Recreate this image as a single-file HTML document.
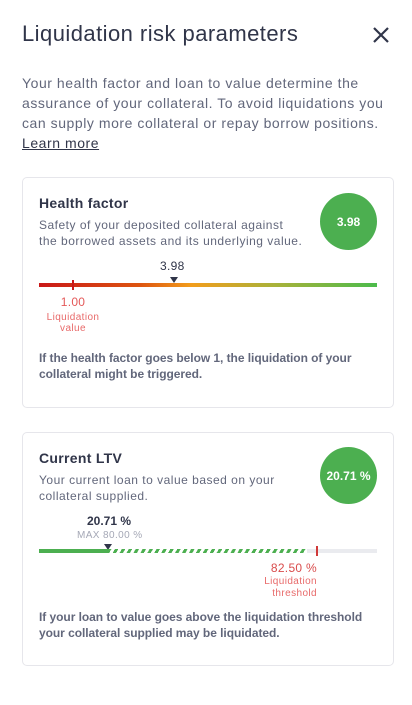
<!DOCTYPE html><html><head><style>
*{margin:0;padding:0;box-sizing:border-box}
body{width:412px;height:705px;background:#fff;font-family:"Liberation Sans",sans-serif;color:#303549;position:relative;overflow:hidden}
.a{position:absolute;white-space:nowrap}
.card{position:absolute;left:22px;width:372px;border:1px solid #e6e6eb;border-radius:5px}
.p{color:#62677b}
.circ{position:absolute;width:57px;height:57px;border-radius:50%;background:#4caf50;color:#fff;font-weight:bold;font-size:12px;display:flex;align-items:center;justify-content:center}
.tri{position:absolute;width:0;height:0;border-left:4px solid transparent;border-right:4px solid transparent;border-top:6px solid #303549}
</style></head><body>
<div class="a" style="left:22px;top:21px;font-size:22px;letter-spacing:.45px">Liquidation risk parameters</div>
<svg class="a" style="left:372px;top:26px" width="18" height="18" viewBox="0 0 18 18"><path d="M2 2L16 16M16 2L2 16" stroke="#303549" stroke-width="2.2"/></svg>
<div class="a p" style="left:22px;top:73px;font-size:14px;line-height:20px;letter-spacing:.55px">Your health factor and loan to value determine the<br>assurance of your collateral. To avoid liquidations you<br>can supply more collateral or repay borrow positions.<br><span style="text-decoration:underline;color:#303549">Learn more</span></div>

<div class="card" style="top:177px;height:231px"></div>
<div class="a" style="left:39px;top:195px;font-size:14px;font-weight:bold;letter-spacing:.3px">Health factor</div>
<div class="a p" style="left:39px;top:217px;font-size:12px;line-height:16px;letter-spacing:.5px">Safety of your deposited collateral against<br>the borrowed assets and its underlying value.</div>
<div class="circ" style="left:320px;top:193px">3.98</div>
<div class="a" style="left:160px;top:259px;font-size:12px;letter-spacing:.3px">3.98</div>
<div class="tri" style="left:170px;top:277px"></div>
<div class="a" style="left:39px;top:283px;width:338px;height:4px;background:linear-gradient(90deg,#c91818,#dd5510 30%,#f29d1c 45%,#a8b23a 70%,#4bbb4b)"></div>
<div class="a" style="left:72px;top:280px;width:2px;height:10px;background:#c91818"></div>
<div class="a" style="left:49px;top:295px;width:48px;text-align:center;font-size:12px;color:#e45959;letter-spacing:.3px">1.00</div>
<div class="a" style="left:36px;top:312px;width:74px;text-align:center;font-size:10px;line-height:11px;color:#e86a6a;letter-spacing:.4px">Liquidation<br>value</div>
<div class="a p" style="left:39px;top:350px;font-size:12px;line-height:16px;font-weight:bold;letter-spacing:-.05px">If the health factor goes below 1, the liquidation of your<br>collateral might be triggered.</div>

<div class="card" style="top:432px;height:234px"></div>
<div class="a" style="left:39px;top:450px;font-size:14px;font-weight:bold;letter-spacing:.3px">Current LTV</div>
<div class="a p" style="left:39px;top:472px;font-size:12px;line-height:16px;letter-spacing:.5px">Your current loan to value based on your<br>collateral supplied.</div>
<div class="circ" style="left:320px;top:447px">20.71 %</div>
<div class="a" style="left:87px;top:514px;font-size:12px;font-weight:bold">20.71 %</div>
<div class="a" style="left:77px;top:530px;font-size:10px;color:#a5a8b6;letter-spacing:.4px">MAX 80.00 %</div>
<div class="tri" style="left:104px;top:544px"></div>
<div class="a" style="left:39px;top:549px;width:338px;height:4px;background:#eaebef"></div>
<div class="a" style="left:39px;top:549px;width:69px;height:4px;background:#4caf50"></div>
<div class="a" style="left:108px;top:549px;width:199px;height:4px;background:repeating-linear-gradient(120deg,#4caf50 0 3px,#fff 3px 6px)"></div>
<div class="a" style="left:316px;top:546px;width:2px;height:10px;background:#d03939"></div>
<div class="a" style="left:247px;top:561px;width:70px;text-align:right;font-size:12px;color:#d94c4c;letter-spacing:.3px">82.50 %</div>
<div class="a" style="left:237px;top:576px;width:80px;text-align:right;font-size:10px;line-height:12px;color:#e86a6a;letter-spacing:.4px">Liquidation<br>threshold</div>
<div class="a p" style="left:39px;top:609px;font-size:12px;line-height:16px;font-weight:bold;letter-spacing:-.05px">If your loan to value goes above the liquidation threshold<br>your collateral supplied may be liquidated.</div>
</body></html>
